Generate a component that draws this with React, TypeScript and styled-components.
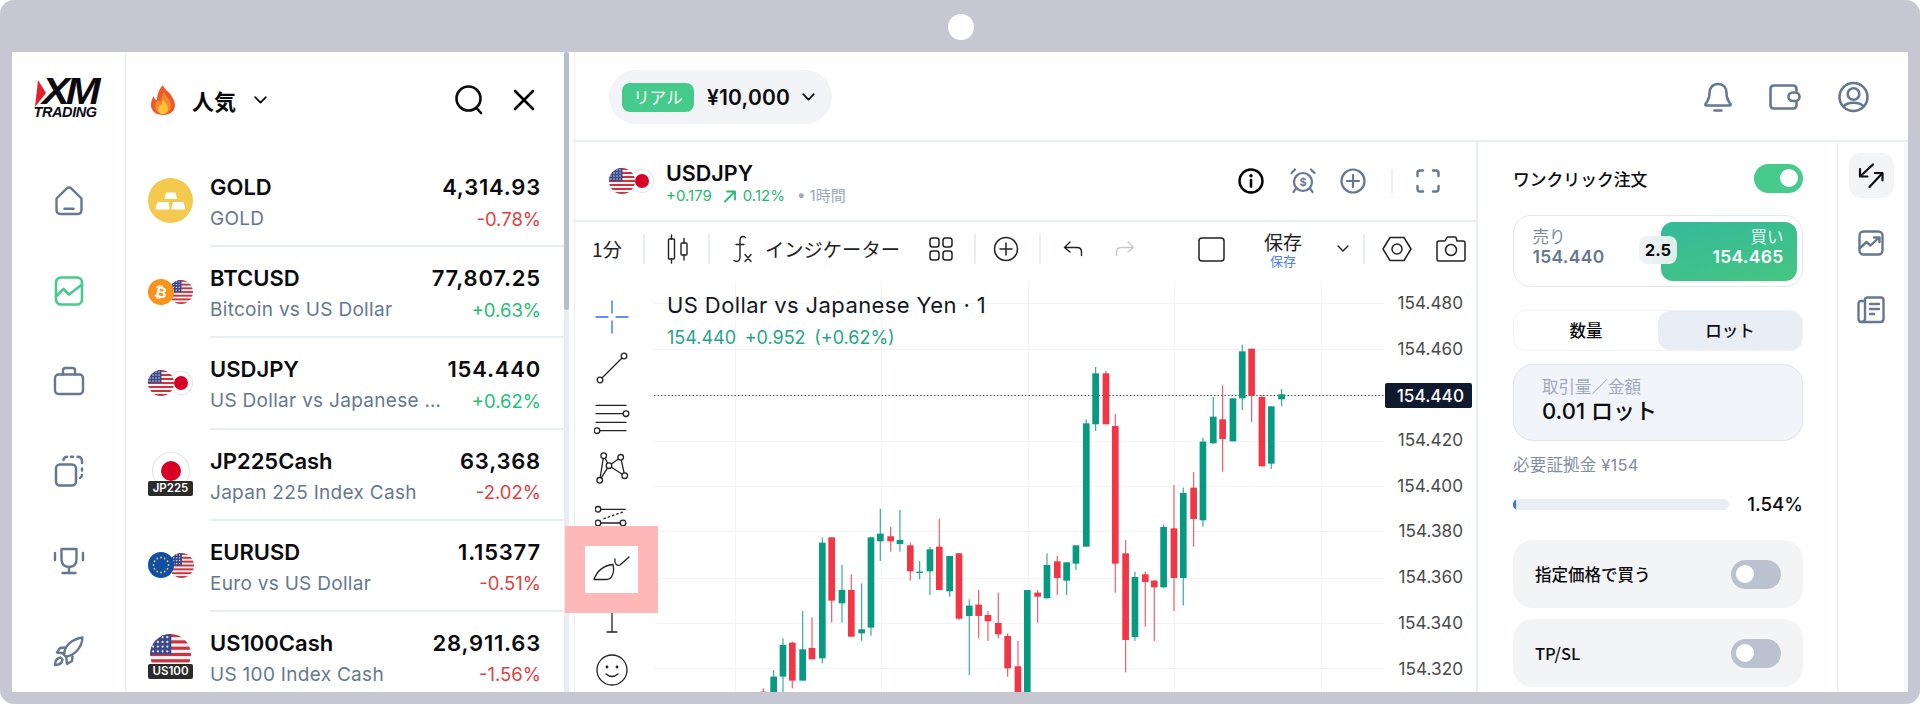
import React, { useId } from 'react';
import styled, { createGlobalStyle } from 'styled-components';

const slate = '#66788F';
const green = '#47CB8C';
const line = '#E9EDF4';
const latin = `Inter, "Noto Sans CJK JP", sans-serif`;

const GlobalStyle = createGlobalStyle`
  html, body { margin: 0; padding: 0; background: #fff; }
  body { font-family: ${latin}; color: #0b0b0f; }
  * { box-sizing: border-box; }
`;

/* ---------- frame ---------- */
const Frame = styled.div`
  position: relative;
  width: 1920px;
  height: 704px;
  padding: 52px 12px 12px;
  background: #c6c7d3;
  border-radius: 14px;
  overflow: hidden;
`;
const Notch = styled.div`
  position: absolute;
  left: 948px;
  top: 14px;
  width: 26px;
  height: 26px;
  border-radius: 50%;
  background: #fff;
`;
const Screen = styled.div`
  display: flex;
  height: 640px;
  background: #fff;
  overflow: hidden;
`;

/* ---------- side nav ---------- */
const SideNav = styled.nav`
  width: 114px;
  flex: none;
  border-right: 1px solid ${line};
  display: flex;
  flex-direction: column;
  align-items: center;
`;
const Logo = styled.div`
  width: 70px;
  height: 41px;
  margin: 27px 0 36px;
  position: relative;
  padding-left: 8px;
  display: flex;
  flex-direction: column;
`;
const LogoMark = styled.span`
  font: italic 700 36px/26px 'Liberation Sans', sans-serif;
  letter-spacing: -3.5px;
  color: #0b0b0f;
  transform: scaleX(1.16);
  transform-origin: left;
`;
const LogoWord = styled.span`
  font: italic 700 14.5px/15px 'Liberation Sans', sans-serif;
  letter-spacing: -0.4px;
  margin-left: -8px;
  color: #0b0b0f;
`;
const LogoFlag = styled.svg`
  position: absolute;
  left: 1px;
  top: 1px;
`;
const NavItem = styled.div`
  height: 90px;
  flex: none;
  display: flex;
  align-items: center;
  justify-content: center;
  color: ${(p: { $on?: boolean }) => (p.$on ? green : slate)};
`;

/* ---------- market list ---------- */
const ListPanel = styled.section`
  width: 449px;
  flex: none;
  display: flex;
`;
const ListBody = styled.div`
  width: 438px;
  flex: none;
`;
const Scroll = styled.div`
  width: 5px;
  flex: none;
  background: #e8edf4;
`;
const ScrollThumb = styled.div`
  height: 258px;
  background: #b4becd;
  border-radius: 3px;
`;
const ListHead = styled.header`
  height: 104px;
  display: flex;
  align-items: center;
  padding: 0 29px 8px 24px;
`;
const ListTitle = styled.span`
  font-size: 22px;
  font-weight: 700;
  margin-left: 16px;
  font-family: 'Noto Sans CJK JP', sans-serif;
`;
const HeadSpacer = styled.div`
  flex: 1;
`;
const Row = styled.div`
  height: 91.2px;
  display: flex;
  padding-left: 22px;
`;
const RowIcon = styled.div`
  width: 45px;
  flex: none;
  margin-right: 17px;
  height: 89px;
  display: flex;
  align-items: center;
  justify-content: center;
`;
const RowText = styled.div`
  flex: 1;
  min-width: 0;
  border-bottom: 2px solid ${line};
  padding: 15px 23px 0 0;
  display: grid;
  grid-template-columns: 1fr auto;
  grid-template-rows: 32px 31px;
  align-items: center;
`;
const Symbol = styled.div`
  font-size: 22px;
  font-weight: 600;
`;
const Price = styled.div`
  font-size: 22px;
  font-weight: 600;
  text-align: right;
  letter-spacing: 0.8px;
`;
const Name = styled.div`
  font-size: 19px;
  letter-spacing: 0.3px;
  color: ${slate};
  max-width: 234px;
  white-space: nowrap;
  overflow: hidden;
  text-overflow: ellipsis;
`;
const Change = styled.div<{ $up?: boolean }>`
  font-size: 18.5px;
  text-align: right;
  color: ${(p) => (p.$up ? '#22bf75' : '#e53e3e')};
`;
const Pair = styled.div`
  display: flex;
  align-items: center;
  & > svg:first-child {
    position: relative;
    z-index: 1;
  }
  & > svg + svg {
    margin-left: -5px;
  }
`;
const IndexIcon = styled.div`
  display: flex;
  flex-direction: column;
  align-items: center;
`;
const IndexBadge = styled.div<{ $overlap: number }>`
  position: relative;
  width: 45px;
  height: 15px;
  margin-top: -${(p) => p.$overlap}px;
  background: #2b2b2b;
  border-radius: 2px;
  color: #fff;
  font-size: 11.5px;
  font-weight: 600;
  line-height: 15px;
  text-align: center;
`;

/* ---------- main ---------- */
const Main = styled.main`
  flex: 1;
  min-width: 0;
  display: flex;
  flex-direction: column;
  border-left: 1px solid ${line};
  margin-left: -1px;
`;
const Gutter = styled.div`
  width: 4px;
  flex: none;
  background: #f8f9fb;
`;
const TopBar = styled.header`
  height: 90px;
  flex: none;
  border-bottom: 2px solid ${line};
  display: flex;
  align-items: center;
  padding: 2px 39px 0 34px;
`;
const AccountPill = styled.div`
  height: 54px;
  width: 223px;
  border-radius: 27px;
  background: #f2f4f7;
  display: flex;
  align-items: center;
  padding-left: 13px;
`;
const RealBadge = styled.span`
  width: 72px;
  height: 29px;
  border-radius: 8px;
  background: ${green};
  color: #fff;
  font-size: 16.5px;
  line-height: 28px;
  text-align: center;
  font-family: 'Noto Sans CJK JP', sans-serif;
`;
const Balance = styled.span`
  font-size: 21px;
  font-weight: 600;
  margin: 0 12px 0 13px;
  letter-spacing: 0.2px;
`;
const TopIcons = styled.div`
  margin-left: auto;
  display: flex;
  align-items: center;
  gap: 37px;
  color: ${slate};
`;
const Body = styled.div`
  flex: 1;
  min-height: 0;
  display: flex;
`;
const ChartColumn = styled.div`
  width: 903px;
  flex: none;
  border-right: 2px solid ${line};
  display: flex;
  flex-direction: column;
`;
const SymbolHeader = styled.div`
  height: 80px;
  flex: none;
  border-bottom: 2px solid ${line};
  display: flex;
  align-items: center;
  padding: 0 36px 0 34px;
`;
const SymbolText = styled.div`
  margin: 4px 0 0 12px;
  flex: none;
  white-space: nowrap;
`;
const SymbolTitle = styled.div`
  font-size: 21.5px;
  font-weight: 600;
  line-height: 26px;
`;
const SymbolStats = styled.div`
  display: flex;
  align-items: center;
  font-size: 15px;
  line-height: 20px;
  color: #28b873;
`;
const StatArrow = styled.span`
  display: flex;
  margin: 0 6px 0 11px;
`;
const Timeframe = styled.span`
  color: #9aa8bc;
  margin-left: 12px;
`;
const HeadActions = styled.div`
  margin-left: auto;
  display: flex;
  align-items: center;
`;
const HeadIcon = styled.div<{ $ml: number; $dark?: boolean }>`
  margin-left: ${(p) => p.$ml}px;
  display: flex;
  color: ${(p) => (p.$dark ? '#000' : slate)};
`;
const VRule = styled.div<{ $ml: number; $h?: number }>`
  width: 2px;
  height: ${(p) => p.$h ?? 30}px;
  margin-left: ${(p) => p.$ml}px;
  background: ${line};
`;
const Toolbar = styled.div`
  height: 58px;
  flex: none;
  display: flex;
  align-items: center;
  padding: 0 0 4px 17px;
  color: #222;
`;
const TbItem = styled.div<{ $ml?: number }>`
  margin-left: ${(p) => p.$ml ?? 0}px;
  display: flex;
  font-size: 19.3px;
  font-family: 'Noto Sans CJK JP', sans-serif;
`;
const SaveBlock = styled.div`
  margin-left: 39px;
  width: 38px;
  display: flex;
  flex-direction: column;
  align-items: center;
  font-family: 'Noto Sans CJK JP', sans-serif;
  font-size: 19px;
  line-height: 22px;
`;
const SaveSub = styled.span`
  font-size: 13px;
  line-height: 15px;
  color: #4d7cfe;
`;
const ChartArea = styled.div`
  flex: 1;
  min-height: 0;
  display: flex;
`;
const Tools = styled.div`
  width: 79px;
  flex: none;
  padding: 12px 5px 0 0;
`;
const Tool = styled.div`
  position: relative;
  height: 50.4px;
  display: flex;
  align-items: center;
  justify-content: center;
  color: #222;
`;
const Marker = styled.div`
  position: absolute;
  z-index: 5;
  left: -10px;
  top: -18px;
  width: 93px;
  height: 87px;
  background: #ffb8b8;
  padding: 20px;
`;
const MarkerInner = styled.div`
  width: 53px;
  height: 47px;
  background: #fff;
  display: flex;
  align-items: center;
  justify-content: center;
  color: #222;
`;
const Plot = styled.div`
  position: relative;
  width: 730px;
  flex: none;
`;
const Legend = styled.div`
  position: absolute;
  left: 13px;
  top: 10px;
`;
const LegendTitle = styled.div`
  font-size: 22px;
  letter-spacing: 0.4px;
  line-height: 30px;
  color: #131722;
`;
const LegendValue = styled.div`
  font-size: 18px;
  line-height: 30px;
  margin-top: 3px;
  color: #1fa68a;
  word-spacing: 3.5px;
`;
const Axis = styled.div`
  position: relative;
  flex: 1;
  font-size: 17.2px;
`;
const Tick = styled.div`
  height: 45.7px;
  line-height: 45.7px;
  padding-right: 13px;
  text-align: right;
  color: #4a4a4a;
`;
const LastTag = styled.div`
  position: absolute;
  left: 1px;
  top: 103px;
  width: 87px;
  height: 25px;
  line-height: 25px;
  border-radius: 2px;
  padding-right: 8px;
  text-align: right;
  font-weight: 500;
  color: #fff;
  background: #0f1a2e;
`;

/* ---------- order panel ---------- */
const OrderPanel = styled.aside`
  width: 360px;
  flex: none;
  border-right: 1px solid ${line};
  padding: 22px 34px 0 35px;
`;
const OneClick = styled.div`
  height: 29px;
  display: flex;
  align-items: center;
  justify-content: space-between;
  font-size: 16.8px;
  font-weight: 500;
  font-family: 'Noto Sans CJK JP', sans-serif;
`;
const Toggle = styled.div<{ $on?: boolean }>`
  width: ${(p) => (p.$on ? 49 : 50)}px;
  height: 29px;
  border-radius: 15px;
  padding: 5px;
  display: flex;
  justify-content: ${(p) => (p.$on ? 'flex-end' : 'flex-start')};
  background: ${(p) => (p.$on ? green : '#bac2cf')};
  &::after {
    content: '';
    width: 18px;
    height: 18px;
    border-radius: 50%;
    background: #fff;
  }
`;
const Quote = styled.div`
  position: relative;
  height: 72px;
  margin-top: 22px;
  border: 1.5px solid #e3e7ee;
  border-radius: 18px;
  display: flex;
  justify-content: space-between;
  padding: 5.5px;
`;
const SellSide = styled.div`
  padding: 4px 0 0 13px;
  color: ${slate};
`;
const QuoteLabel = styled.div`
  font-family: 'Noto Sans CJK JP', sans-serif;
  font-size: 16.5px;
  line-height: 20px;
  opacity: 0.85;
`;
const QuotePrice = styled.div`
  font-size: 17.5px;
  font-weight: 600;
  line-height: 22px;
  letter-spacing: 0.3px;
`;
const BuySide = styled.div`
  width: 136px;
  height: 59px;
  border-radius: 12px;
  padding: 4px 13px 0 0;
  text-align: right;
  color: #fff;
  background: linear-gradient(165deg, #35b99a, #45c682);
`;
const Spread = styled.div`
  position: absolute;
  left: 125px;
  top: 20px;
  width: 38px;
  height: 28px;
  border-radius: 8px;
  background: linear-gradient(90deg, #f1f4f7, #dcefe8);
  font-size: 16.5px;
  font-weight: 700;
  line-height: 28px;
  text-align: center;
`;
const Tabs = styled.div`
  height: 41px;
  margin-top: 23px;
  border: 1px solid #f0f2f5;
  border-radius: 12px;
  display: grid;
  grid-template-columns: 1fr 1fr;
`;
const TabCell = styled.div<{ $on?: boolean }>`
  border-radius: 12px;
  background: ${(p) => (p.$on ? line : 'transparent')};
  font-family: 'Noto Sans CJK JP', sans-serif;
  font-size: 16.5px;
  font-weight: 500;
  line-height: 39px;
  text-align: center;
`;
const Volume = styled.div`
  height: 77px;
  margin-top: 13px;
  border: 1.5px solid #dee5ef;
  border-radius: 20px;
  background: #f1f4f9;
  padding: 9px 0 0 28px;
`;
const VolumeLabel = styled.div`
  font-family: 'Noto Sans CJK JP', sans-serif;
  font-size: 16.5px;
  line-height: 24px;
  color: #a0aabb;
`;
const VolumeValue = styled.div`
  font-size: 22px;
  font-weight: 500;
  line-height: 26px;
`;
const Margin = styled.div`
  margin-top: 12px;
  font-size: 16.5px;
  line-height: 24px;
  letter-spacing: 0.2px;
  color: #7f8ea3;
`;
const Usage = styled.div`
  margin-top: 15px;
  height: 24px;
  display: flex;
  align-items: center;
  justify-content: space-between;
  font-size: 18.8px;
  font-weight: 500;
`;
const Track = styled.div`
  width: 216px;
  height: 11px;
  border-radius: 6px;
  background: ${line};
  overflow: hidden;
`;
const Fill = styled.div`
  height: 100%;
  background: #2f6bff;
  border-radius: 6px;
`;
const Option = styled.div<{ $mt: number }>`
  height: 68px;
  margin-top: ${(p) => p.$mt}px;
  border-radius: 20px;
  background: #f3f4f6;
  display: flex;
  align-items: center;
  justify-content: space-between;
  padding: 0 22px;
  font-size: 16.5px;
  font-weight: 500;
  font-family: 'Noto Sans CJK JP', sans-serif;
`;
const RightRail = styled.div`
  flex: 1;
  display: flex;
  flex-direction: column;
  align-items: center;
  padding-top: 11px;
  color: ${slate};
`;
const RailItem = styled.div<{ $on?: boolean }>`
  width: 45px;
  height: 45px;
  border-radius: 12px;
  margin-bottom: 22px;
  background: ${(p) => (p.$on ? '#f3f4f6' : 'transparent')};
  color: ${(p) => (p.$on ? '#111' : slate)};
  display: flex;
  align-items: center;
  justify-content: center;
`;

/* ---------- icons ---------- */
type IconProps = { w: number; h: number; sw?: number; children: React.ReactNode };
const Ico = ({ w, h, sw = 2.4, children }: IconProps) => (
  <svg width={w} height={h} viewBox={`0 0 ${w} ${h}`} fill="none" stroke="currentColor" strokeWidth={sw} strokeLinecap="round" strokeLinejoin="round">
    {children}
  </svg>
);

const HomeIcon = () => (
  <Ico w={30} h={30}>
    <path d="M2.5 12.5 13 2.2q2-1.4 4 0l10.5 10.3V24q0 4-4 4h-17q-4 0-4-4Z" />
    <path d="M10.5 22.8h9" />
  </Ico>
);
const ChartBoxIcon = () => (
  <Ico w={30} h={30} sw={2.6}>
    <rect x="2" y="1.5" width="26" height="27" rx="5" />
    <path d="M2 20.5 9.5 13l5.5 5.5L28 8.5" />
  </Ico>
);
const BagIcon = () => (
  <Ico w={32} h={30}>
    <rect x="2" y="8.5" width="28" height="19.5" rx="3.5" />
    <path d="M10 8.5V4.5q0-2.5 2.5-2.5h7q2.5 0 2.5 2.5v4" />
  </Ico>
);
const CopyIcon = () => (
  <Ico w={32} h={32} sw={2.5}>
    <rect x="3" y="9.5" width="20" height="21" rx="4" />
    <path d="M10.5 5q.5-3 3.5-3.2M18 1.800h2M24.500 1.800q4.500 0 4.500 4.500V8M29 13.500v2M29 20q0 2-2 3" />
  </Ico>
);
const TrophyIcon = () => (
  <Ico w={32} h={28}>
    <path d="M8.500 2h15v10q0 8-7.500 8t-7.500-8Z" />
    <path d="M16 20v5.500M9.500 26h13M2 6v7M30 6v7" />
  </Ico>
);
const RocketIcon = () => (
  <Ico w={31} h={31}>
    <path d="M11 19C11 10 19 3 29.500 1.500 29 12 21 20 12.500 20.500Z" />
    <path d="M12.500 11.500 7 12l-3 4.500 7.500 1M19.500 20.500 19 25l-5 3-.8-7.500" />
    <path d="M7.500 21.500C4 22 2 25 2 29c4 0 7-2 7.500-5.500Z" />
  </Ico>
);
const Flame = () => (
  <svg width="26" height="30" viewBox="0 0 26 30">
    <path d="M13 0c1 4 5 6 8 10 2 3 4 7 4 10 0 6-5 10-12 10S1 26 1 20c0-3 1-7 3-9 0 2 1 4 3 4 0-5 2-11 6-15Z" fill="#ef5a2a" />
    <path d="M14 7c1 4 6 7 7 13 0 5-4 9-8 9s-8-3-8-8c0-3 2-5 3-6 1 1 2 2 3 1 1-3 1-6 3-9Z" fill="#f58a2c" />
    <path d="M13 15c1 2 5 4 5 8s-2 6-5 6-5-2-5-5c0-2 1-3 2-4 1 1 2 0 2-1 0-1 0-3 1-4Z" fill="#fdc33a" />
  </svg>
);
const Chevron = ({ w = 13 }: { w?: number }) => (
  <svg width={w} height={w * 0.6} viewBox="0 0 13 8" fill="none" stroke="currentColor" strokeWidth="1.600" strokeLinecap="round" strokeLinejoin="round">
    <path d="M1 1.200 6.500 6.800 12 1.200" />
  </svg>
);
const SearchIcon = () => (
  <Ico w={30} h={30} sw={2.6}>
    <circle cx="14.500" cy="13.500" r="12" />
    <path d="M22.500 23l4.500 5" />
  </Ico>
);
const CloseIcon = () => (
  <Ico w={22} h={22} sw={2.6}>
    <path d="M2 2l18 18M20 2 2 20" />
  </Ico>
);

const GoldIcon = () => (
  <svg width="45" height="45" viewBox="0 0 45 45">
    <circle cx="22.500" cy="22.500" r="22.500" fill="#f3c94f" />
    <path d="M18 14.500h9.500l1.500 6.500H16.500Z" fill="#fff" />
    <path d="M9.500 24h11l1.200 6.500q0 1-1 1H8.500q-1 0-1-1Z" fill="#fff" />
    <path d="M25 24h10.500l1.700 6.500q0 1-1 1H24.500q-1 0-1-1Z" fill="#fff" />
  </svg>
);
const UsFlag = ({ size }: { size: number }) => {
  const id = useId();
  const stripes = [0, 2, 4, 6, 8, 10, 12];
  return (
    <svg width={size} height={size} viewBox="0 0 26 26">
      <defs>
        <clipPath id={id}>
          <circle cx="13" cy="13" r="13" />
        </clipPath>
      </defs>
      <g clipPath={`url(#${id})`}>
        <rect width="26" height="26" fill="#f4f4f4" />
        {stripes.map((i) => (
          <rect key={i} y={i * 2} width="26" height="2" fill="#c8343f" />
        ))}
        <rect width="13.500" height="13" fill="#3c4a8c" />
        {[2, 5, 8, 11].map((y) => [2, 5, 8, 11].map((x) => <circle key={`${x}-${y}`} cx={x} cy={y} r="0.700" fill="#e8ebf7" />))}
      </g>
    </svg>
  );
};
const JpFlag = ({ size, dot }: { size: number; dot: number }) => (
  <svg width={size} height={size} viewBox={`0 0 ${size} ${size}`}>
    <circle cx={size / 2} cy={size / 2} r={size / 2 - 0.5} fill="#fff" stroke="#e6e6e6" strokeWidth="1.200" />
    <circle cx={size / 2} cy={size / 2} r={dot} fill="#d90026" />
  </svg>
);
const BtcCoin = () => (
  <svg width="26" height="26" viewBox="0 0 26 26">
    <circle cx="13" cy="13" r="13" fill="#f7931a" />
    <text x="13" y="18.500" textAnchor="middle" fontSize="15" fontWeight="700" fontFamily="'DejaVu Sans', sans-serif" fill="#fff" transform="rotate(12 13 13)">
      ₿
    </text>
  </svg>
);
const EuFlag = () => {
  const dots = Array.from({ length: 12 }, (_, i) => i * 30);
  return (
    <svg width="26" height="26" viewBox="0 0 26 26">
      <circle cx="13" cy="13" r="13" fill="#0f4fa8" />
      {dots.map((a) => (
        <circle key={a} cx={13 + 7.500 * Math.cos((a * Math.PI) / 180)} cy={13 + 7.500 * Math.sin((a * Math.PI) / 180)} r="0.900" fill="#f6c927" />
      ))}
    </svg>
  );
};
const LogoRed = () => (
  <LogoFlag width="12" height="28" viewBox="0 0 12 28">
    <path d="M3 0 11 13 0 27Z" fill="#e4202d" />
  </LogoFlag>
);

const InfoIcon = () => (
  <Ico w={26} h={26} sw={2.4}>
    <circle cx="13" cy="13" r="11.500" />
    <path d="M13 12v6.500" strokeWidth="2.600" />
    <circle cx="13" cy="7.800" r="0.800" strokeWidth="1.800" />
  </Ico>
);
const AlarmIcon = () => (
  <Ico w={26} h={26} sw={2.2}>
    <circle cx="13" cy="14" r="9" />
    <path d="M1.500 5 5 1.500M24.500 5 21 1.500M5.500 21l-2 3M20.500 21l2 3" />
    <text x="13" y="18" textAnchor="middle" fontSize="11" fontWeight="700" fill="currentColor" stroke="none" fontFamily="Inter, sans-serif">
      $
    </text>
  </Ico>
);
const PlusCircle = ({ sw = 2.2 }: { sw?: number }) => (
  <Ico w={26} h={26} sw={sw}>
    <circle cx="13" cy="13" r="11.500" />
    <path d="M13 7v12M7 13h12" />
  </Ico>
);
const FullIcon = () => (
  <Ico w={24} h={24} sw={2.4}>
    <path d="M1.500 7V4q0-2.500 2.500-2.500h3M17 1.500h3q2.500 0 2.500 2.500v3M22.500 17v3q0 2.500-2.500 2.500h-3M7 22.500H4q-2.500 0-2.500-2.500v-3" />
  </Ico>
);
const BellIcon = () => (
  <Ico w={28} h={30} sw={2.6}>
    <path d="M14 2c-5.500 0-8.500 4-8.500 9 0 5-1.500 8-4 11q-.5 1.500 1 1.500h23q1.500 0 1-1.500c-2.500-3-4-6-4-11 0-5-3-9-8.500-9Z" />
    <path d="M10.500 28.500h7" />
  </Ico>
);
const WalletIcon = () => (
  <Ico w={32} h={26} sw={2.6}>
    <path d="M27.500 7V5q0-3.500-3.500-3.500H5Q1.500 1.500 1.500 5v16q0 3.500 3.500 3.500h19q3.500 0 3.500-3.500v-3" />
    <rect x="19.500" y="8.500" width="11" height="8.500" rx="4.200" />
  </Ico>
);
const UserIcon = () => (
  <Ico w={31} h={32} sw={2.6}>
    <circle cx="15.500" cy="16" r="14" />
    <circle cx="15.500" cy="13" r="5.800" />
    <path d="M5.500 25.500C8 22.500 11 21.800 15.500 21.800s7.500.7 10 3.700" />
  </Ico>
);
const TrendArrow = () => (
  <Ico w={14} h={14} sw={1.800}>
    <path d="M2 12.500 12 2.500M4 2.500h8v8" />
  </Ico>
);
const CandleIcon = () => (
  <Ico w={22} h={30} sw={1.400}>
    <rect x="1.500" y="5" width="6" height="20" rx="1" />
    <path d="M4.500 1v4M4.500 25v4" />
    <rect x="14" y="9" width="6" height="12" rx="1" />
    <path d="M17 4.500V9M17 21v5" />
  </Ico>
);
const FxIcon = () => (
  <Ico w={20} h={28} sw={1.400}>
    <path d="M13.500 2.500C11 .5 8 1.500 8 5.500v17C8 26 5 27.500 2 25.500" />
    <path d="M4 9.500h8" />
    <path d="M13 19.500l6 7M19 19.500l-6 7" />
  </Ico>
);
const GridIcon = () => (
  <Ico w={24} h={24} sw={1.500}>
    <rect x="1" y="1" width="9" height="9" rx="2.500" />
    <rect x="14" y="1" width="9" height="9" rx="2.500" />
    <rect x="1" y="14" width="9" height="9" rx="2.500" />
    <rect x="14" y="14" width="9" height="9" rx="2.500" />
  </Ico>
);
const UndoIcon = ({ flip, color }: { flip?: boolean; color?: string }) => (
  <svg width="20" height="16" viewBox="0 0 20 16" fill="none" stroke={color ?? 'currentColor'} strokeWidth="1.400" strokeLinecap="round" strokeLinejoin="round" style={flip ? { transform: 'scaleX(-1)' } : undefined}>
    <path d="M7 1 1.500 6.500 7 11M1.500 6.500H14q4.500 0 4.500 4.500v3.500" />
  </svg>
);
const SquareIcon = () => (
  <Ico w={27} h={25} sw={1.500}>
    <rect x="1" y="1" width="25" height="23" rx="3" />
  </Ico>
);
const HexIcon = () => (
  <Ico w={30} h={26} sw={1.500}>
    <path d="M1 13 8 1.500h14L29 13l-7 11.500H8Z" />
    <circle cx="15" cy="13" r="5" />
  </Ico>
);
const CameraIcon = () => (
  <Ico w={30} h={26} sw={1.500}>
    <path d="M3 5h6l2-3.500q.5-.5 1-.5h7q.5 0 1 .5L21 5h6q2 0 2 2v16q0 2-2 2H3q-2 0-2-2V7q0-2 2-2Z" />
    <circle cx="15" cy="14" r="5.500" />
  </Ico>
);

const Node = ({ x, y, r = 2.800 }: { x: number; y: number; r?: number }) => <circle cx={x} cy={y} r={r} fill="#fff" />;
const CrossTool = () => (
  <Ico w={34} h={34} sw={1.300}>
    <path d="M17 1v12M17 21v12M1 17h12M21 17h12" stroke="#2b6cff" />
  </Ico>
);
const LineTool = () => (
  <Ico w={34} h={34} sw={1.300}>
    <path d="M6 28 28 6" />
    <Node x={5} y={29} />
    <Node x={29} y={5} />
  </Ico>
);
const ChannelTool = () => (
  <Ico w={36} h={34} sw={1.300}>
    <path d="M2 4.300h30M2 12.700h28M2 21.300h30M5 29.700h27" />
    <Node x={32} y={12.700} />
    <Node x={3} y={29.700} />
  </Ico>
);
const PatternTool = () => (
  <Ico w={34} h={34} sw={1.300}>
    <path d="M4.700 29.300 8.700 4.700 14 14.700 25.700 6.300 29.700 24.700 14 14.700Z" />
    <Node x={4.700} y={29.300} />
    <Node x={8.700} y={4.700} />
    <Node x={14} y={14.700} />
    <Node x={25.700} y={6.300} />
    <Node x={29.700} y={24.700} />
  </Ico>
);
const FibTool = () => (
  <Ico w={34} h={34} sw={1.300}>
    <path d="M5 7.300h25.300M5 21h23" />
    <path d="M9 16.700 28 10" strokeDasharray="1.500 3" />
    <Node x={3} y={7.300} />
    <Node x={3} y={21} />
    <Node x={28} y={21} />
  </Ico>
);
const BrushTool = () => (
  <svg width="37" height="26" viewBox="0 0 37 26" fill="none" stroke="currentColor" strokeWidth="1.300" strokeLinecap="round" strokeLinejoin="round">
    <path d="M1 23.500H14C18 23.500 22 18 20 8.500 11 9.500 4 15 1 23.500Z" />
    <path d="M22 3C21 7 24 10.500 27 9L36 1" />
  </svg>
);
const TextTool = () => (
  <Ico w={34} h={34} sw={1.300}>
    <path d="M17 2v27M12 29h10" />
  </Ico>
);
const SmileTool = () => (
  <Ico w={34} h={34} sw={1.300}>
    <circle cx="17" cy="17" r="15" />
    <circle cx="12" cy="14" r="0.800" fill="currentColor" />
    <circle cx="22" cy="14" r="0.800" fill="currentColor" />
    <path d="M11 21q6 5 12 0" />
  </Ico>
);

const SwapIcon = () => (
  <Ico w={26} h={26} sw={2.200}>
    <path d="M15 1.500 2 13.500M2 6v7.500h7.500M11.500 24 24.500 10M17 10h7.500v7.500" />
  </Ico>
);
const ChartUpIcon = () => (
  <Ico w={26} h={26} sw={2.400}>
    <rect x="1.500" y="1.500" width="23" height="23" rx="4" />
    <path d="M2 18l6.500-6 4 3.500 8.500-8M16 7.500h5.500V12" />
  </Ico>
);
const DocIcon = () => (
  <Ico w={28} h={28} sw={2.400}>
    <path d="M8 5V4q0-2.500 2.500-2.500h13.500q2.500 0 2.500 2.500v19q0 3-3 3H5" />
    <path d="M8 5H4.500q-3 0-3 3v15q0 3 3 3s3.500-.5 3.500-3V5Z" />
    <path d="M13 8h9M13 13h9M13 18h4" />
  </Ico>
);

/* ---------- chart data, in 3x crop coordinates ---------- */
type Candle = [number, number, number, number, number, 0 | 1];
const candles: Candle[] = [
  [340, 1075, 1090, 1085, 1095, 0], [371, 1020, 1090, 1040, 1090, 1], [399, 925, 1090, 945, 1040, 1],
  [427, 935, 1075, 938, 1052, 0], [458, 843, 1052, 958, 1052, 1], [486, 862, 988, 954, 988, 0],
  [517, 622, 1000, 638, 985, 1], [545, 622, 878, 622, 812, 0], [576, 705, 878, 780, 820, 1],
  [604, 733, 920, 780, 920, 0], [635, 760, 933, 898, 910, 1], [663, 622, 917, 622, 893, 1],
  [691, 536, 693, 611, 634, 1], [722, 591, 665, 619, 634, 0], [750, 540, 665, 630, 642, 1],
  [781, 638, 752, 646, 724, 0], [809, 693, 748, 725, 729, 1], [840, 650, 795, 658, 724, 1],
  [868, 567, 780, 650, 780, 0], [899, 678, 800, 678, 784, 1], [927, 670, 870, 670, 866, 0],
  [958, 808, 1035, 827, 858, 1], [986, 780, 925, 824, 858, 0], [1014, 843, 933, 855, 874, 0],
  [1045, 788, 925, 879, 913, 0], [1073, 910, 1040, 918, 1015, 0], [1104, 933, 1090, 1009, 1090, 0],
  [1132, 780, 1090, 780, 1090, 1], [1163, 780, 878, 788, 800, 0], [1191, 670, 805, 705, 805, 1],
  [1222, 678, 795, 694, 744, 0], [1250, 697, 795, 697, 752, 1], [1278, 646, 720, 646, 701, 1],
  [1309, 268, 650, 280, 650, 1], [1337, 111, 303, 130, 283, 1], [1368, 123, 283, 130, 283, 0],
  [1396, 252, 788, 288, 701, 0], [1427, 630, 1027, 670, 930, 0], [1455, 725, 933, 741, 921, 1],
  [1486, 725, 890, 733, 756, 0], [1513, 750, 933, 752, 772, 0], [1541, 583, 775, 591, 772, 1],
  [1572, 465, 843, 595, 744, 0], [1600, 473, 827, 489, 744, 1], [1631, 426, 650, 473, 567, 0],
  [1659, 323, 590, 335, 571, 1], [1690, 201, 342, 260, 340, 1], [1718, 166, 425, 268, 327, 0],
  [1749, 205, 334, 205, 334, 1], [1777, 44, 240, 64, 205, 1], [1805, 56, 276, 56, 197, 0],
  [1836, 195, 409, 201, 409, 0], [1864, 229, 417, 229, 401, 1], [1895, 177, 229, 193, 208, 1],
];
const gridY = [303, 349, 395, 441, 486, 531, 578, 623, 668];
const gridX = [735, 881, 1028, 1174, 1321];

const PriceChart = () => (
  <svg width="730" height="412" viewBox="0 0 730 412" style={{ display: 'block' }}>
    {gridY.map((y) => (
      <line key={y} x1="0" x2="730" y1={y - 280 + 0.5} y2={y - 280 + 0.5} stroke="#f2f3f5" />
    ))}
    {gridX.map((x) => (
      <line key={x} x1={x - 654 + 0.5} x2={x - 654 + 0.5} y1="2" y2="412" stroke="#f2f3f5" />
    ))}
    <line x1="0" x2="730" y1="115.500" y2="115.500" stroke="#555" strokeWidth="1" strokeDasharray="1.500 2" />
    <g transform="translate(-4 50) scale(0.3333)">
      {candles.map(([x, hi, lo, top, bot, up]) => {
        const color = up ? '#089981' : '#f23645';
        return (
          <g key={x}>
            <rect x={x - 1.800} y={hi} width="3.600" height={lo - hi} fill={color} opacity="0.8" />
            <rect x={x - 10} y={top} width="20" height={bot - top} fill={color} />
          </g>
        );
      })}
    </g>
  </svg>
);

const ticks = ['154.480', '154.460', '154.440', '154.420', '154.400', '154.380', '154.360', '154.340', '154.320'];

const markets = [
  { sym: 'GOLD', name: 'GOLD', price: '4,314.93', chg: '-0.78%', up: false, icon: <GoldIcon /> },
  { sym: 'BTCUSD', name: 'Bitcoin vs US Dollar', price: '77,807.25', chg: '+0.63%', up: true, icon: <Pair><BtcCoin /><UsFlag size={24} /></Pair> },
  { sym: 'USDJPY', name: 'US Dollar vs Japanese Yen', price: '154.440', chg: '+0.62%', up: true, icon: <Pair><UsFlag size={26} /><JpFlag size={24} dot={7} /></Pair> },
  {
    sym: 'JP225Cash', name: 'Japan 225 Index Cash', price: '63,368', chg: '-2.02%', up: false,
    icon: <IndexIcon><JpFlag size={38} dot={10} /><IndexBadge $overlap={9}>JP225</IndexBadge></IndexIcon>,
  },
  { sym: 'EURUSD', name: 'Euro vs US Dollar', price: '1.15377', chg: '-0.51%', up: false, icon: <Pair><EuFlag /><UsFlag size={25} /></Pair> },
  {
    sym: 'US100Cash', name: 'US 100 Index Cash', price: '28,911.63', chg: '-1.56%', up: false,
    icon: <IndexIcon><UsFlag size={41} /><IndexBadge $overlap={11}>US100</IndexBadge></IndexIcon>,
  },
];

export default function App() {
  return (
    <>
      <GlobalStyle />
      <Frame>
        <Notch />
        <Screen>
          <SideNav>
            <Logo>
              <LogoRed />
              <LogoMark>XM</LogoMark>
              <LogoWord>TRADING</LogoWord>
            </Logo>
            <NavItem><HomeIcon /></NavItem>
            <NavItem $on><ChartBoxIcon /></NavItem>
            <NavItem><BagIcon /></NavItem>
            <NavItem><CopyIcon /></NavItem>
            <NavItem><TrophyIcon /></NavItem>
            <NavItem><RocketIcon /></NavItem>
          </SideNav>

          <ListPanel>
            <ListBody>
              <ListHead>
                <Flame />
                <ListTitle>人気</ListTitle>
                <HeadIcon $ml={18} $dark><Chevron /></HeadIcon>
                <HeadSpacer />
                <SearchIcon />
                <HeadIcon $ml={29} $dark><CloseIcon /></HeadIcon>
              </ListHead>
              {markets.map((m) => (
                <Row key={m.sym}>
                  <RowIcon>{m.icon}</RowIcon>
                  <RowText>
                    <Symbol>{m.sym}</Symbol>
                    <Price>{m.price}</Price>
                    <Name>{m.name}</Name>
                    <Change $up={m.up}>{m.chg}</Change>
                  </RowText>
                </Row>
              ))}
            </ListBody>
            <Scroll><ScrollThumb /></Scroll>
          </ListPanel>

          <Main>
            <TopBar>
              <AccountPill>
                <RealBadge>リアル</RealBadge>
                <Balance>¥10,000</Balance>
                <Chevron />
              </AccountPill>
              <TopIcons>
                <BellIcon />
                <WalletIcon />
                <UserIcon />
              </TopIcons>
            </TopBar>
            <Body>
              <ChartColumn>
                <SymbolHeader>
                  <Pair><UsFlag size={26} /><JpFlag size={24} dot={7} /></Pair>
                  <SymbolText>
                    <SymbolTitle>USDJPY</SymbolTitle>
                    <SymbolStats>
                      <span>+0.179</span>
                      <StatArrow><TrendArrow /></StatArrow>
                      <span>0.12%</span>
                      <Timeframe>• 1時間</Timeframe>
                    </SymbolStats>
                  </SymbolText>
                  <HeadActions>
                    <HeadIcon $ml={0} $dark><InfoIcon /></HeadIcon>
                    <HeadIcon $ml={26}><AlarmIcon /></HeadIcon>
                    <HeadIcon $ml={24}><PlusCircle /></HeadIcon>
                    <VRule $ml={25} $h={24} />
                    <HeadIcon $ml={23}><FullIcon /></HeadIcon>
                  </HeadActions>
                </SymbolHeader>
                <Toolbar>
                  <TbItem>1分</TbItem>
                  <VRule $ml={21} />
                  <TbItem $ml={22}><CandleIcon /></TbItem>
                  <VRule $ml={19} />
                  <TbItem $ml={22}><FxIcon /></TbItem>
                  <TbItem $ml={13}>インジケーター</TbItem>
                  <TbItem $ml={29}><GridIcon /></TbItem>
                  <VRule $ml={21} />
                  <TbItem $ml={17}><PlusCircle sw={1.500} /></TbItem>
                  <VRule $ml={20} />
                  <TbItem $ml={22}><UndoIcon /></TbItem>
                  <TbItem $ml={32}><UndoIcon flip color="#c9c9c9" /></TbItem>
                  <TbItem $ml={63}><SquareIcon /></TbItem>
                  <SaveBlock>
                    保存
                    <SaveSub>保存</SaveSub>
                  </SaveBlock>
                  <TbItem $ml={35}><Chevron w={12} /></TbItem>
                  <VRule $ml={14} />
                  <TbItem $ml={17}><HexIcon /></TbItem>
                  <TbItem $ml={24}><CameraIcon /></TbItem>
                </Toolbar>
                <ChartArea>
                  <Tools>
                    <Tool><CrossTool /></Tool>
                    <Tool><LineTool /></Tool>
                    <Tool><ChannelTool /></Tool>
                    <Tool><PatternTool /></Tool>
                    <Tool><FibTool /></Tool>
                    <Tool>
                      <Marker>
                        <MarkerInner><BrushTool /></MarkerInner>
                      </Marker>
                    </Tool>
                    <Tool><TextTool /></Tool>
                    <Tool><SmileTool /></Tool>
                  </Tools>
                  <Plot>
                    <PriceChart />
                    <Legend>
                      <LegendTitle>US Dollar vs Japanese Yen · 1</LegendTitle>
                      <LegendValue>154.440 +0.952 (+0.62%)</LegendValue>
                    </Legend>
                  </Plot>
                  <Axis>
                    {ticks.map((t) => (
                      <Tick key={t}>{t}</Tick>
                    ))}
                    <LastTag>154.440</LastTag>
                  </Axis>
                </ChartArea>
              </ChartColumn>

              <OrderPanel>
                <OneClick>
                  ワンクリック注文
                  <Toggle $on />
                </OneClick>
                <Quote>
                  <SellSide>
                    <QuoteLabel>売り</QuoteLabel>
                    <QuotePrice>154.440</QuotePrice>
                  </SellSide>
                  <BuySide>
                    <QuoteLabel>買い</QuoteLabel>
                    <QuotePrice>154.465</QuotePrice>
                  </BuySide>
                  <Spread>2.5</Spread>
                </Quote>
                <Tabs>
                  <TabCell>数量</TabCell>
                  <TabCell $on>ロット</TabCell>
                </Tabs>
                <Volume>
                  <VolumeLabel>取引量／金額</VolumeLabel>
                  <VolumeValue>0.01 ロット</VolumeValue>
                </Volume>
                <Margin>必要証拠金 ¥154</Margin>
                <Usage>
                  <Track>
                    <Fill style={{ width: '1.54%' }} />
                  </Track>
                  1.54%
                </Usage>
                <Option $mt={24}>
                  指定価格で買う
                  <Toggle />
                </Option>
                <Option $mt={11}>
                  TP/SL
                  <Toggle />
                </Option>
              </OrderPanel>

              <RightRail>
                <RailItem $on><SwapIcon /></RailItem>
                <RailItem><ChartUpIcon /></RailItem>
                <RailItem><DocIcon /></RailItem>
              </RightRail>
              <Gutter />
            </Body>
          </Main>
        </Screen>
      </Frame>
    </>
  );
}
